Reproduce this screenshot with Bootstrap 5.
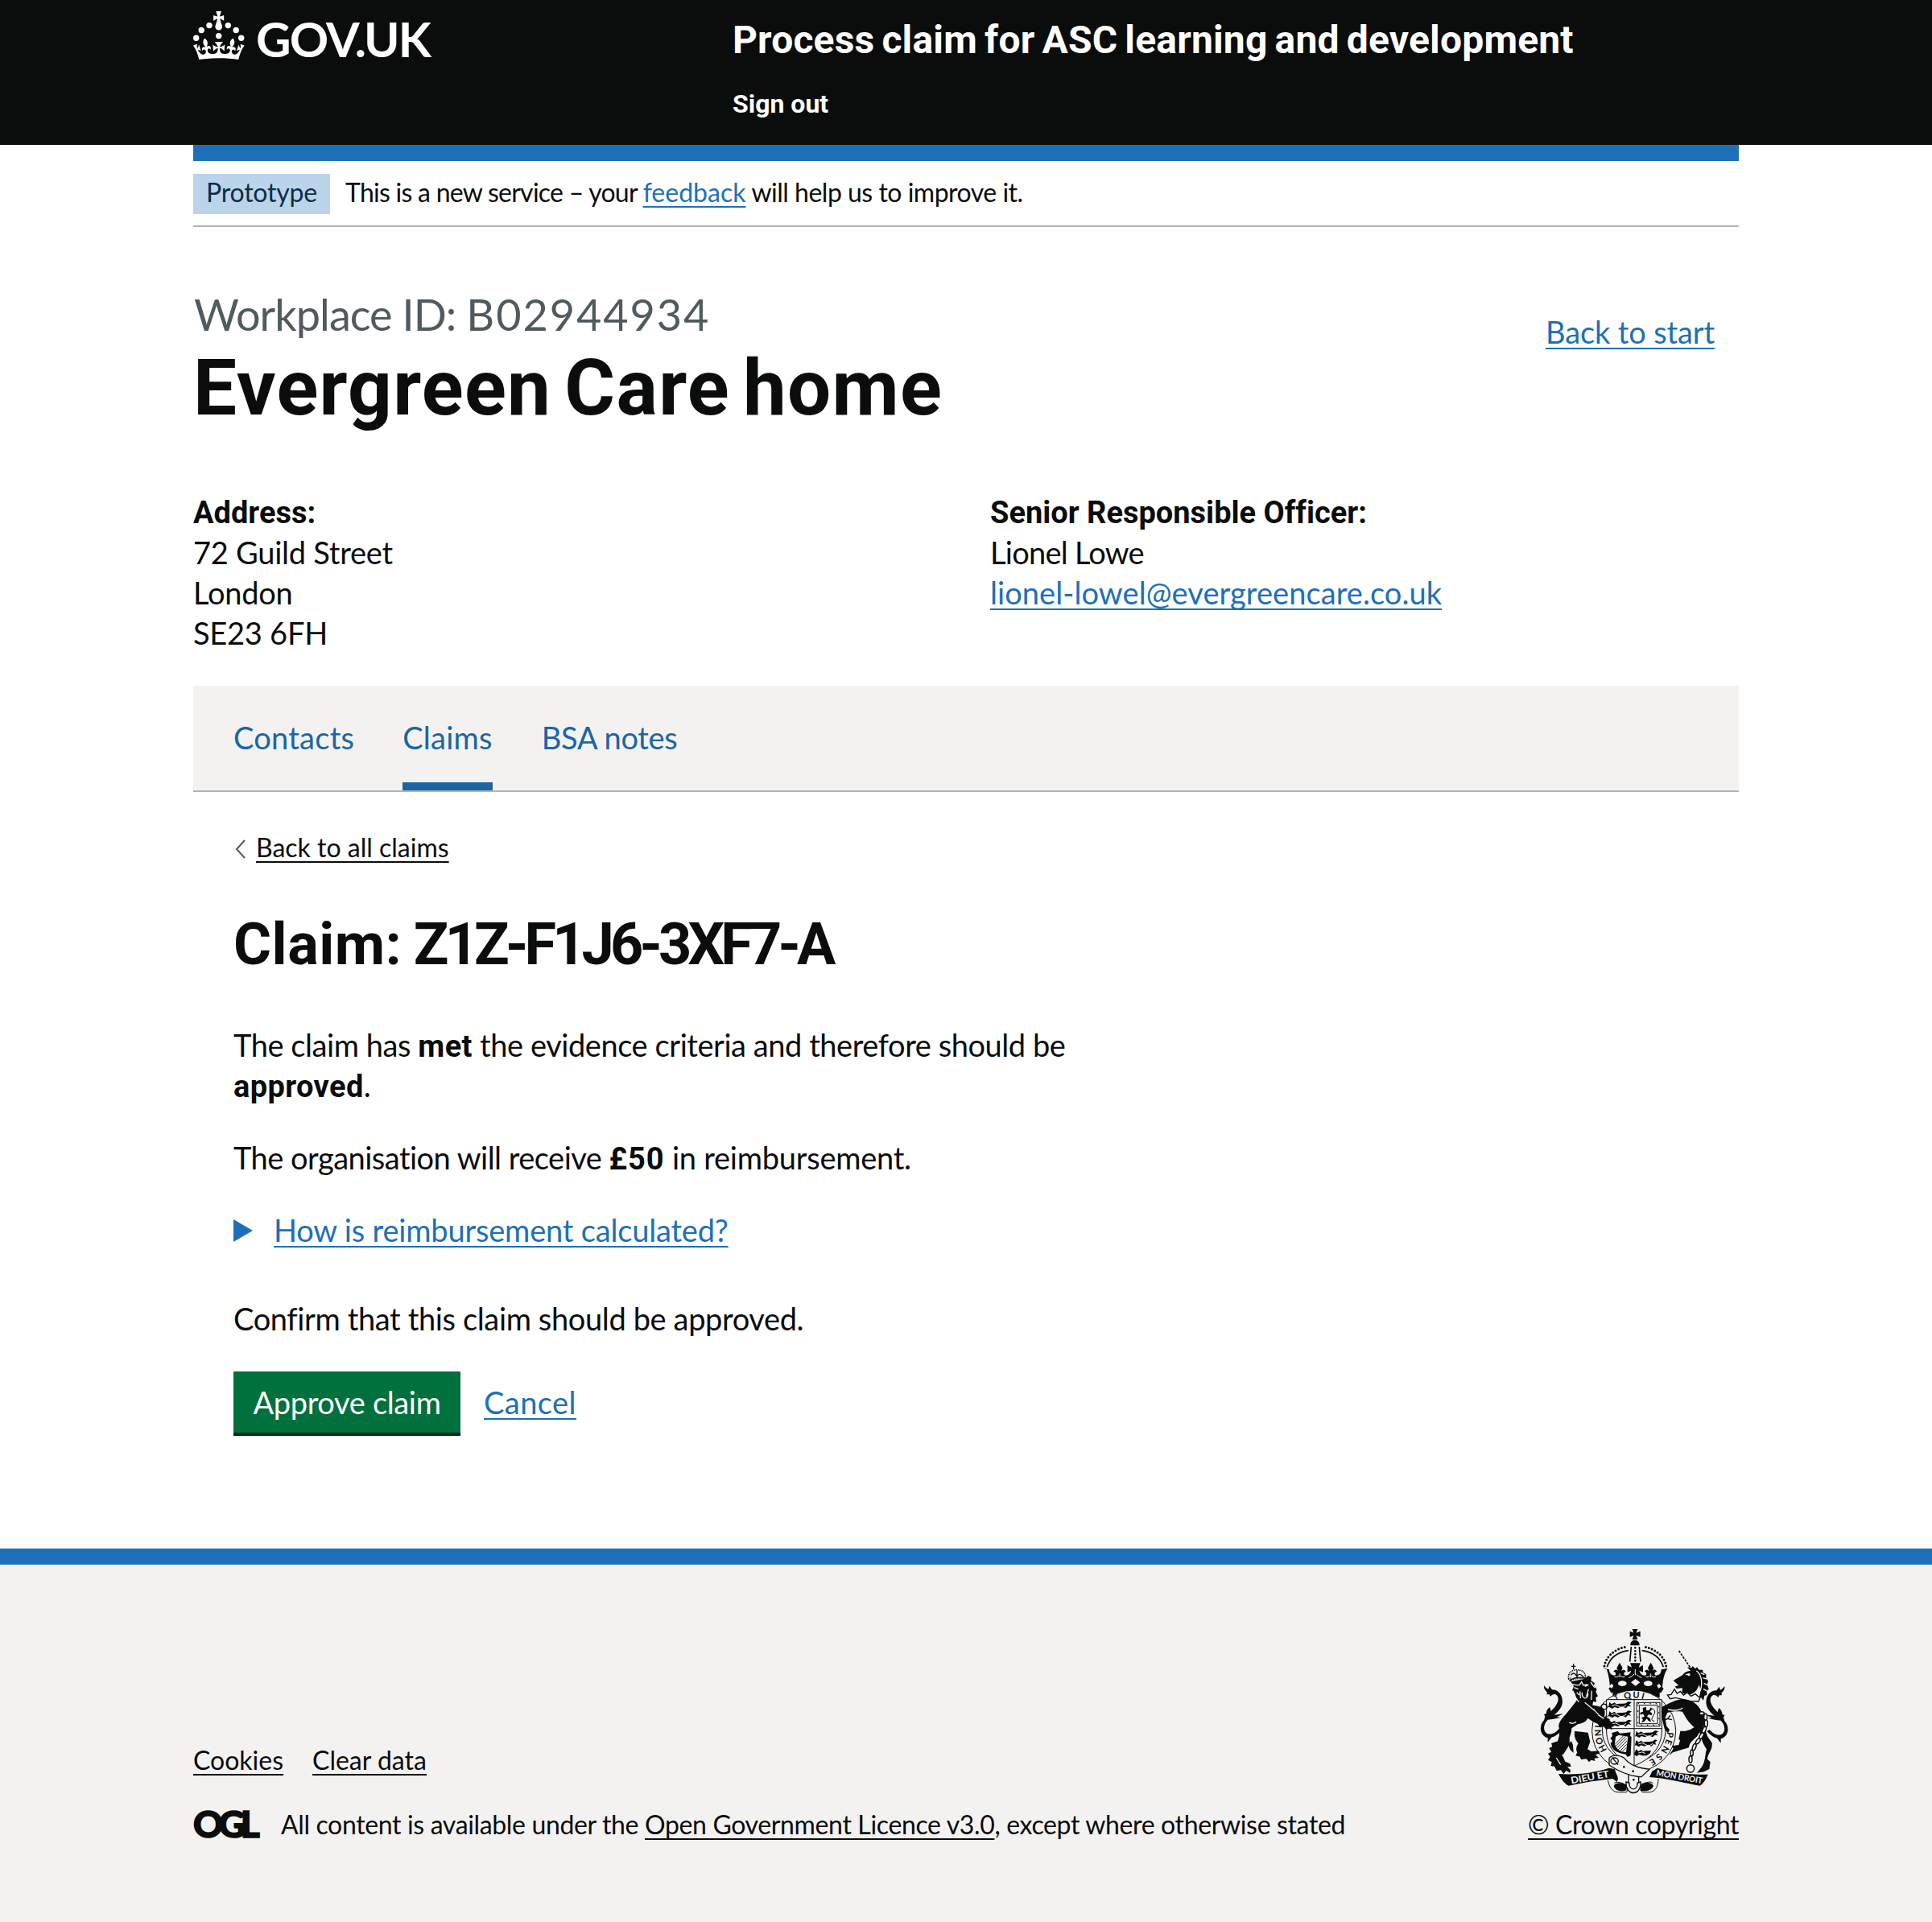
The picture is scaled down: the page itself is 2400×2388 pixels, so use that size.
<!DOCTYPE html>
<html lang="en">
<head>
<meta charset="utf-8">
<meta name="viewport" content="width=device-width, initial-scale=1">
<title>Process claim for ASC learning and development</title>
<link href="https://cdn.jsdelivr.net/npm/bootstrap@5.3.0/dist/css/bootstrap.min.css" rel="stylesheet">
<style>
:root{--ink:#0b0c0c;--blue:#1d70b8;--grey:#f3f2f1;--rule:#b1b4b6}
body{font-family:Lato,"Noto Sans",sans-serif;font-size:38px;line-height:50px;color:var(--ink);background:#fff;font-variant-ligatures:none;min-height:2388px}
.wrap{width:1920px;margin:0 auto}
a{color:var(--blue);text-decoration:underline;text-decoration-thickness:2px;text-underline-offset:5px;text-decoration-skip-ink:none}
a.plain{color:var(--ink)}
b,.strong-face{font-family:Roboto,sans-serif;font-weight:700}
p b{line-height:1}
.masthead{background:var(--ink);color:#fff;height:180px}
.brand{width:670px;padding-top:14px}
.wordmark{font-size:60px;line-height:60px;font-weight:700;letter-spacing:-1.8px;margin-left:14px;padding-top:4px}
.service{padding-top:20px}
.service-name{font-size:48px;line-height:60px;letter-spacing:.17px;word-spacing:-3px}
.signout{font-size:32px;line-height:40px;margin-top:29px}
.bluebar{height:20px;background:var(--blue)}
.phase{height:82px;padding-top:16px;border-bottom:2px solid var(--rule);font-size:32px;line-height:45px}
.phase-tag{height:50px;width:170px;background:#bbd4ea;color:#0c2d4a;padding-left:16px;letter-spacing:-.2px}
.phase-text{margin-left:19px;white-space:pre}
.seg-lead{letter-spacing:-.74px}
.seg-tail{letter-spacing:-.5px}
.title-row{padding-top:79px}
.wid{font-size:54px;line-height:60px;color:#505a5f;letter-spacing:1.95px;padding-left:1px}
.wid span{letter-spacing:-.95px}
.org{font-size:96px;line-height:100px;margin-top:11px;letter-spacing:1.3px;word-spacing:-9px}
.start{padding:26px 30px 0 0;letter-spacing:-.12px}
.details-row{margin-top:80px;letter-spacing:-.25px}
.details-row>div:first-child{width:990px}
.details-row b{display:block;height:49px;line-height:50px;letter-spacing:0}
.officer{letter-spacing:-.75px}
.mail{letter-spacing:.07px}
.tabs{margin-top:41px;height:132px;background:var(--grey);border-bottom:2px solid var(--rule);padding-left:50px;gap:60px}
.tabs a{color:#1a65a6;text-decoration:none;height:130px;padding:39px 0 0;border-radius:0;letter-spacing:.25px}
.tabs a.active{border-bottom:10px solid #1a65a6}
.tabs a:last-child{letter-spacing:-.3px;padding-left:1px}
.panel{padding-left:50px;width:1110px}
.back{margin-top:49px;font-size:32px;line-height:40px}
.back svg{margin:10px 13px 0 2px}
.claim-no{font-size:72px;line-height:80px;letter-spacing:-4.85px;margin:61px 0 59px}
.claim-no span{letter-spacing:.5px;word-spacing:-4px}
.panel p{margin:0 0 40px}
.crit{letter-spacing:-.44px}
.crit b{letter-spacing:.4px}
.receive{letter-spacing:-.52px}
.receive b{letter-spacing:.9px}
.receive span{letter-spacing:-.25px}
.summary{margin-bottom:60px;letter-spacing:-.18px}
.summary svg{margin:12px 26px 0 0}
.confirm{letter-spacing:-.37px}
.btn-go{background:#00703c;color:#fff;border:0;border-radius:0;box-shadow:0 4px 0 #002d18;font-size:38px;line-height:50px;padding:13px 0;width:282px;height:76px;letter-spacing:-.34px}
.actions{padding-top:1px}
.actions a{margin:13px 0 0 29px;letter-spacing:.45px}
.foot{margin-top:144px;border-top:20px solid var(--blue);background:var(--grey);height:464px;font-size:32px;line-height:40px}
.foot-main{padding-top:223px}
.foot-links{gap:36px;margin-bottom:40px}
.licence{letter-spacing:-.355px}
.ogl{font-weight:900;font-size:46px;letter-spacing:-5.9px;width:109px;line-height:38px;-webkit-text-stroke:1.6px var(--ink)}
.crest-col{padding-top:78px;letter-spacing:-.38px}
.crest-col svg{display:block;margin:0 0 17px 14px}
</style>
</head>
<body>
<header class="masthead">
  <div class="wrap d-flex">
    <div class="brand d-flex">
      <svg width="64" height="60" viewBox="0 0 64 60" fill="#fff" aria-hidden="true"><circle cx="20" cy="17.6" r="3.7"/><circle cx="10.2" cy="23.5" r="3.7"/><circle cx="3.7" cy="33.2" r="3.7"/><circle cx="31.7" cy="30.6" r="3.7"/><circle cx="43.3" cy="17.6" r="3.7"/><circle cx="53.2" cy="23.5" r="3.7"/><circle cx="59.7" cy="33.2" r="3.7"/><path d="M33.1,9.8c.2-.1.3-.3.5-.5l4.6,2.4v-6.8l-4.6,1.5c-.1-.2-.3-.3-.5-.5l1.9-5.9h-6.7l1.9,5.9c-.2.1-.3.3-.5.5l-4.6-1.5v6.8l4.6-2.4c.1.2.3.3.5.5l-2.6,8c-.9,2.8,1.2,5.7,4.1,5.7h0c3,0,5.1-2.9,4.1-5.7l-2.6-8ZM37,37.9s-3.4,3.8-4.1,6.1c2.2,0,4.2-.5,6.4-2.8l-.7,8.5c-2-2.8-4.4-4.1-5.7-3.8.1,3.1.5,6.7,5.8,7.2,3.7.3,6.7-1.5,7-3.8.4-2.6-2-4.3-3.7-1.6-1.4-4.5,2.4-6.1,4.9-3.2-1.9-4.5-1.8-7.7,2.4-10.9,3,4,2.6,7.3-1.2,11.1,2.4-1.3,6.2,0,4,4.6-1.2-2.8-3.7-2.2-4.2.2-.3,1.7.7,3.7,3,4.2,1.9.3,4.7-.9,7-5.9-1.3,0-2.4.7-3.9,1.7l2.4-8c.6,2.3,1.4,3.7,2.2,4.5.6-1.6.5-2.8,0-5.3l5,1.8c-2.6,3.6-5.2,8.7-7.3,17.5-7.4-1.1-15.7-1.7-24.5-1.7h0c-8.8,0-17.1.6-24.5,1.7-2.1-8.9-4.7-13.9-7.3-17.5l5-1.8c-.5,2.5-.6,3.7,0,5.3.8-.8,1.6-2.3,2.2-4.5l2.4,8c-1.5-1-2.6-1.7-3.9-1.7,2.3,5,5.2,6.2,7,5.9,2.3-.4,3.3-2.4,3-4.2-.5-2.4-3-3.1-4.2-.2-2.2-4.6,1.6-6,4-4.6-3.7-3.7-4.2-7.1-1.2-11.1,4.2,3.2,4.3,6.4,2.4,10.9,2.5-2.8,6.3-1.3,4.9,3.2-1.8-2.7-4.1-1-3.7,1.6.3,2.3,3.3,4.1,7,3.8,5.4-.5,5.7-4.2,5.8-7.2-1.3-.2-3.7,1-5.7,3.8l-.7-8.5c2.2,2.3,4.2,2.7,6.4,2.8-.7-2.3-4.1-6.1-4.1-6.1h10.6Z"/></svg>
      <span class="wordmark">GOV.UK</span>
    </div>
    <div class="service strong-face">
      <div class="service-name">Process claim for ASC learning and development</div>
      <div class="signout">Sign out</div>
    </div>
  </div>
</header>
<div class="wrap">
  <div class="bluebar"></div>
  <div class="phase d-flex">
    <span class="phase-tag">Prototype</span>
    <span class="phase-text"><span class="seg-lead">This is a new service – your </span><a href="#">feedback</a><span class="seg-tail"> will help us to improve it.</span></span>
  </div>
  <main>
    <div class="title-row d-flex justify-content-between">
      <div>
        <div class="wid"><span>Workplace ID: </span>B02944934</div>
        <h1 class="org strong-face mb-0">Evergreen Care home</h1>
      </div>
      <div class="start"><a href="#">Back to start</a></div>
    </div>
    <div class="details-row d-flex">
      <div><b>Address:</b>72 Guild Street<br>London<br>SE23 6FH</div>
      <div><b>Senior Responsible Officer:</b><span class="officer">Lionel Lowe</span><br><a href="#" class="mail">lionel-lowel@evergreencare.co.uk</a></div>
    </div>
    <nav class="tabs nav">
      <a href="#">Contacts</a>
      <a href="#" class="active">Claims</a>
      <a href="#">BSA notes</a>
    </nav>
    <div class="panel">
      <div class="back d-flex align-items-start">
        <svg width="13" height="24" viewBox="0 0 13 24" fill="none" stroke="#505a5f" stroke-width="2"><path d="M12 1 2 12l10 11"/></svg>
        <a class="plain" href="#">Back to all claims</a>
      </div>
      <h2 class="claim-no strong-face"><span>Claim: </span>Z1Z-F1J6-3XF7-A</h2>
      <p class="crit">The claim has <b>met</b> the evidence criteria and therefore should be <b>approved</b>.</p>
      <p class="receive">The organisation will receive <b>£50</b><span> in reimbursement.</span></p>
      <div class="summary d-flex align-items-start">
        <svg width="24" height="28" viewBox="0 0 24 28"><path d="M0 0 24 14 0 28Z" fill="#1d70b8"/></svg>
        <a href="#">How is reimbursement calculated?</a>
      </div>
      <p class="confirm">Confirm that this claim should be approved.</p>
      <div class="actions d-flex align-items-start">
        <button class="btn btn-go" type="button">Approve claim</button>
        <a href="#">Cancel</a>
      </div>
    </div>
  </main>
</div>
<footer class="foot">
  <div class="wrap d-flex justify-content-between">
    <div class="foot-main">
      <div class="foot-links d-flex"><a class="plain" href="#">Cookies</a><a class="plain" href="#">Clear data</a></div>
      <div class="d-flex"><span class="ogl">OGL</span><span class="licence">All content is available under the <a class="plain" href="#">Open Government Licence v3.0</a>, except where otherwise stated</span></div>
    </div>
    <div class="crest-col">
      <svg width="236" height="208" viewBox="66 66 708 624" fill="#0b0c0c" stroke="none" aria-hidden="true">
        <!-- crown -->
        <path d="M413 72h20l-5 14 15-6v22l-15-6 5 15h-20l5-15-14 6V80l14 6Z"/>
        <path d="M406 133c-2-26 36-26 34 0Z"/>
        <g fill="none" stroke="#0b0c0c">
          <path d="M309 210C316 172 350 144 396 137M539 210C532 172 498 144 452 137" stroke-width="9" stroke-linecap="round" stroke-dasharray="0 12.2"/>
          <path d="M319 214C330 180 358 158 399 152M529 214C518 180 490 158 449 152" stroke-width="5"/>
          <path d="M409 138 404 194M439 138 444 194" stroke-width="5"/>
          <path d="M424 142V196" stroke-width="8" stroke-linecap="round" stroke-dasharray="0 12"/>
        </g>
        <path d="M303 218l24 5c0 12 6 21 18 22 10 0 8-14-2-14 4-10 14-10 17-2l-5-12 11-20 11 20-5 12c5-8 15-6 17 2-8 0-10 14 0 14 10-1 17-8 20-18l-14 6v-26l16 8-6-16h38l-6 16 16-8v26l-14-6c3 10 10 17 20 18 10 0 8-14 0-14 2-8 12-10 17-2l-5-12 11-20 11 20-5 12c3-8 13-8 17 2-10 0-12 14-2 14 12-1 18-10 18-22l24-5c-16 24-17 44-20 71l5 5-10 16-5-2v20c-60-18-115-18-175 0v-20l-6 2-9-16 5-5c-2-27-5-47-14-71Z"/>
        <g fill="#f3f2f1"><ellipse cx="376" cy="275" rx="16" ry="10"/><ellipse cx="472" cy="275" rx="16" ry="10"/><path d="M408 271l17-13 17 13-17 13ZM335 276l8 6-6 12-10-8ZM513 276l-8 6 6 12 10-8Z"/></g>
        <path d="M366 238v14M347 250q10 4 16-4M385 250q-10 4-16-4M424 222v22M482 238v14M463 250q10 4 16-4M501 250q-10 4-16-4M400 254q14-6 20-14M448 254q-14-6-20-14" stroke="#f3f2f1" stroke-width="3" fill="none"/>
        <!-- garter -->
        <ellipse cx="419" cy="452" rx="156" ry="152" fill="#f3f2f1" stroke="#0b0c0c" stroke-width="3"/>
        <ellipse cx="419" cy="450" rx="118" ry="116" fill="none" stroke="#0b0c0c" stroke-width="3"/>
        <!-- shield -->
        <path d="M317 335H523V450C523 520 474 560 420 582 366 560 317 520 317 450Z" fill="#f3f2f1" stroke="#0b0c0c" stroke-width="3"/>
        <g font-family="Lato" font-weight="700" font-size="33" text-anchor="middle">
          <text transform="rotate(-119 420 452) translate(420 329)">H</text><text transform="rotate(-106 420 452) translate(420 329)">O</text><text transform="rotate(-93 420 452) translate(420 329)">N</text><text transform="rotate(-83 420 452) translate(420 329)">I</text><text transform="rotate(-62 420 452) translate(420 325)">S</text><text transform="rotate(-51 420 452) translate(420 320)">O</text><text transform="rotate(-28 420 452) translate(420 320)" font-size="26">T</text><text transform="rotate(-11 420 452) translate(420 329)">Q</text><text transform="rotate(3 420 452) translate(420 329)">U</text><text transform="rotate(14 420 452) translate(420 329)">I</text><text transform="rotate(70 420 452) translate(420 329)">Y</text><text transform="rotate(96 420 452) translate(420 329)">P</text><text transform="rotate(108 420 452) translate(420 329)">E</text><text transform="rotate(121 420 452) translate(420 329)">N</text><text transform="rotate(136 420 452) translate(420 329)">S</text><text transform="rotate(149 420 452) translate(420 329)">E</text>
        </g>
        <path d="M420 335V580M317 443H523" stroke="#0b0c0c" stroke-width="3"/>
        <path d="M328 344l8 8 10-6 8 6c18-4 24 0 36-4l8-6 13 3-10 8 8 8-12-2-8 8-14-6-16 6-12-4-8 6-12-6-10 2 8-6ZM328 378l8 8 10-6 8 6c18-4 24 0 36-4l8-6 13 3-10 8 8 8-12-2-8 8-14-6-16 6-12-4-8 6-12-6-10 2 8-6ZM328 412l8 8 10-6 8 6c18-4 24 0 36-4l8-6 13 3-10 8 8 8-12-2-8 8-14-6-16 6-12-4-8 6-12-6-10 2 8-6Z"/>
        <path d="M428 452l8 8 10-6 8 6c18-4 24 0 36-4l8-6 13 3-10 8 8 8-12-2-8 8-14-6-16 6-12-4-8 6-12-6-4 2 2-6ZM428 486l8 8 10-6 8 6c18-4 24 0 36-4l8-6 8 3-8 8 4 8-10-2-8 8-12-6-14 6-12-4-8 6-12-6-4 2 2-6ZM428 520l8 8 10-6 8 6c12-4 18 0 30-4l-6 12-12 8-16 0-12-4-8 6-10-6 2-8Z"/>
        <path d="M336 358q14-8 26 2t28-4M336 392q14-8 26 2t28-4M336 426q14-8 26 2t28-4M436 466q14-8 26 2t28-4M436 500q14-8 26 2t28-4M436 534q14-8 26 2" stroke="#f3f2f1" stroke-width="3" fill="none"/>
        <path d="M429 346H516V434H429ZM439 356H507V425H439Z" stroke="#0b0c0c" stroke-width="3" fill="none"/><path d="M434 350H512V430H434Z" stroke="#0b0c0c" stroke-width="4" stroke-dasharray="4 18" fill="none"/>
        <path d="M452 366l12-4 2 14 10-2 6-10 5 6-8 10 8 6-2 8-10-4-8 8 12 6 4 14-10-4-6-8-10 12-10 2 6-10-6-8 12-4-6-10-8 4-4-8 12-4Z"/>
        <path d="M484 368q22 6 8 26t4 22M452 384l18 16" stroke="#0b0c0c" stroke-width="3" fill="none"/>
        <path d="M337 459l22-6 8 8 40-4-2 12 5 6-3 68-12 6-6-10c-30-4-52-14-57-40l7-10-8-10 8-8Z"/>
        <path d="M351 473l12-6 34 6-7 58c-24 0-38-12-42-32Z" fill="#f3f2f1"/>
        <path d="M350 500 380 470M352 508 388 472M356 515 392 479M361 521 393 489M368 526 392 502M376 529 391 514" stroke="#0b0c0c" stroke-width="2.6"/>
        <!-- belt -->
        <g fill="#f3f2f1" stroke="#0b0c0c" stroke-width="4">
          <path d="M399 612h38v50c0 28-38 28-38 0Z"/>
          <path d="M327 553c10-14 40-12 56 0 22 26 48 36 94 42l-30 28c-52-2-90-24-120-44Z"/>
          <ellipse cx="347" cy="564" rx="14" ry="12"/><path d="M338 550l22 28"/>
          <path d="M390 642c-4 54 58 54 54 0l-12 4c2 30-32 30-30 0Z"/>
        </g>
        <circle cx="382" cy="586" r="4"/><circle cx="416" cy="602" r="4"/><circle cx="418" cy="634" r="4"/>
        <!-- lion -->
        <path d="M176 258c-4-20 8-32 28-34 20 0 36 8 34 28l-4 6c-16-4-36-2-54 6Z" fill="none" stroke="#0b0c0c" stroke-width="5" stroke-dasharray="4 3"/>
        <path d="M186 211h16M194 202v20M182 262c16-10 38-12 58-6M207 226v28M184 244q12-16 22 4 12-16 26 4" stroke="#0b0c0c" stroke-width="4" fill="none"/>
        <path d="M183 268l52-10 14-12 12 6-2 12 14 10-4 10 12 12-4 10 8 16-8 6 2 16-12-2-2 14c30 4 40 8 46 24l-2 18 20 10-2 12 16 6-8 8 4 14-14-8-8 8-10-12-16 2-6-12-18-8-20-14c-4 12-20 20-36 22l-24 16c0 14-4 22-8 36 2 20-4 34-12 44l-14 22 10 22 18 8 4 10-14 2 12 12-2 10-14-8-10 12-10-14-16 2-8-16-14-2 4-14-14-8 8-12-8-12 12-6-8-14 12-6-4-12 24-8c8-22 8-36 4-54 0-20 16-34 28-48l30-38 10-14-8-24-10-12 6-14-10-16 2-10-6-12Z"/>
        <path d="M196 452l52 6 8 34-10 28 14 8 28-2 4 10-16 4 12 12-16 2 2 10-14-4-8 8-10-12-20 2-4-10-16-4 6-12c-6-10-4-22 4-34-12-12-16-28-14-46ZM172 500l14-10 6 14 2 30-12-12Z"/>
        <path id="tail" d="M84 282c4 6 10 12 16 14l4-12 10 14c30 0 42 30 38 52-4 18-16 30-30 42l34-4-24 12 14 2-30 6-18 2c-18 18-18 44-2 52 16 6 32-4 44-18l10 6c-14 14-22 22-38 26l-14 18v-16c-30-8-34-46-14-66l4-14-4-8 8-2c2-14 6-20 14-24l4 14c18-16 34-40 24-56-8-12-20-6-26 2l-4-8-10 0 2-8c-8-8-14-14-12-26Z"/>
        <path d="M190 277l14 4 12 0 8-12 6 12 16-2M196 290l16 6M236 286l14-6M206 308l10 10M218 304l2 26M250 296l-8 28M226 308c-2 26 22 30 22 4M202 328l12 16M262 302l-2 34M258 270l14 20M192 302l8 22" fill="none" stroke="#f3f2f1" stroke-width="4"/>
        <path d="M152 540l18 22M130 552l16 26M268 370l20 22M178 420c8 6 20 4 26-2M286 392l22 14M236 346l36 30" fill="none" stroke="#f3f2f1" stroke-width="4"/>
        <!-- unicorn -->
        <path d="M587 153 628 214" stroke="#0b0c0c" stroke-width="5" stroke-dasharray="9 4"/>
        <path d="M566 264l34-20c8-12 20-16 30-16l-12-14 16 2 4-6 10 10 6-6 8 10 14 0 0 10 12 6 0 14 8 12-4 12 6 18-8 6 2 16-10 2-4 18-14-18c4-14 4-24-2-40-8 22-16 32-40 38l-24-8 2-18-22 2-6-8 14-4Z"/>
        <path d="M652 228c20 14 24 46 14 76M668 236l14 6M676 254l14 4M680 274l12 6M678 296l12 6M612 242l14-2" fill="none" stroke="#f3f2f1" stroke-width="4"/><circle cx="624" cy="242" r="5" fill="#f3f2f1"/>
        <path d="M570 296l10 16 12-8 12 14 14-10 14 14 16-8 14 12 8-8-10 24-32-2-54-12-20 4-10-14 14-2Z" fill="#f3f2f1" stroke="#0b0c0c" stroke-width="4"/>
        <path d="M524 362c22-10 44-24 70-28 34-2 62 16 74 40 10 18 20 34 14 54-6 18-20 28-26 42-20 18-30 26-32 44l-60 18-14 12 16-26-6-10 26-4 6-20c0-20 14-32 36-36l16-10c-20-16-32-36-44-58-20-2-38-2-56 4l-8 18 4 30 12 16-6 12-12-14c-8-30-14-54-10-84Z"/>
        <path d="M592 452l56 0 6 20-26 24-28 0-14-14Z"/>
        <path d="M600 366c-10 10-34 10-54 6" stroke="#f3f2f1" stroke-width="4" fill="none"/>
        <path d="M662 444l24-6c0 28 12 42 24 58 2 18-4 28-12 42l-6 18 12 12-4 26-20 10-26 4 18-22c14-20 12-46 18-66-12-18-22-38-28-76Z"/>
        <use href="#tail" transform="matrix(-1 0 0 1 841 3)"/>
        <g fill="#f3f2f1" stroke="#0b0c0c" stroke-width="4.5">
          <ellipse cx="672" cy="386" rx="9" ry="6"/><ellipse cx="686" cy="400" rx="6" ry="12"/><ellipse cx="688" cy="424" rx="6" ry="13"/><ellipse cx="681" cy="448" rx="6" ry="13" transform="rotate(22 681 448)"/><ellipse cx="671" cy="470" rx="6" ry="13" transform="rotate(30 671 470)"/><ellipse cx="658" cy="490" rx="6" ry="12" transform="rotate(36 658 490)"/><ellipse cx="644" cy="512" rx="6" ry="13" transform="rotate(20 644 512)"/><ellipse cx="635" cy="534" rx="5" ry="12"/><ellipse cx="630" cy="558" rx="6" ry="13"/><circle cx="630" cy="592" r="14"/>
        </g>
        <!-- motto scrolls -->
        <path d="M138 612c66 4 124-2 188-22l22 4c4 22 18 30 8 48l-16-12c-56 6-110 14-164 26-10-4-22-14-38-44Z"/>
        <path d="M695 614c-62 2-128-6-188-24l-20 12-10 22 24 2c58 6 108 20 164 30 12-8 22-22 30-42Z"/>
        <path d="M322 636c6 26 16 44 40 44h30l4-14-16-18c-16-6-28-6-34-2M510 630c0 28-10 48-32 50h-28l-6-18 16-16c16-6 28-4 30 2" fill="none" stroke="#0b0c0c" stroke-width="3"/>
        <path d="M344 656c8-14 34-12 46-4l2 20c-16 8-44 4-48-16ZM492 656c-8-14-30-14-46-6l-4 24c18 4 44 2 50-18Z"/>
        <g font-family="Lato" font-weight="700" font-size="35" fill="#f3f2f1">
          <text transform="translate(186 649) rotate(-10)" textLength="144" lengthAdjust="spacingAndGlyphs">DIEU ET</text>
          <text transform="translate(501 618) rotate(10)" textLength="174" lengthAdjust="spacingAndGlyphs" font-size="31">MON DROIT</text>
        </g>
      </svg>
      <a class="plain" href="#">© Crown copyright</a>
    </div>
  </div>
</footer>
<script src="https://cdn.jsdelivr.net/npm/bootstrap@5.3.0/dist/js/bootstrap.bundle.min.js"></script>
</body>
</html>
